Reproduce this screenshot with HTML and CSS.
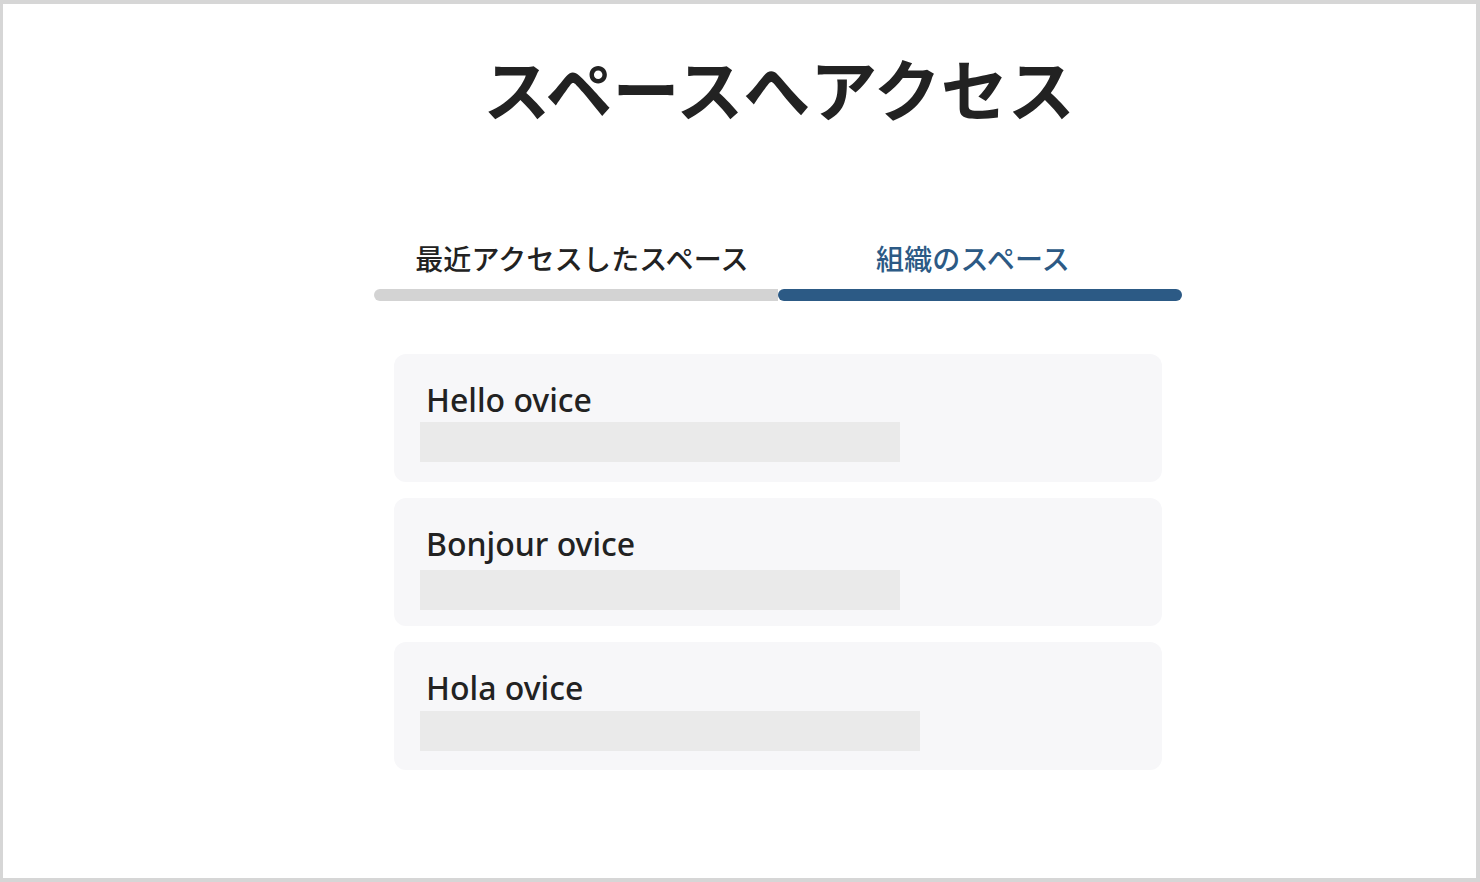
FILE: index.html
```html
<!DOCTYPE html>
<html lang="ja">
<head>
<meta charset="utf-8">
<title>スペースへアクセス</title>
<link rel="stylesheet" href="styles.css">
</head>
<body>
<div class="frame">
  <main class="column">
    <h1 class="title">スペースへアクセス</h1>
    <nav class="tabs">
      <div class="tab tab-first">
        <span class="tab-label">最近アクセスしたスペース</span>
        <span class="tab-bar"></span>
      </div>
      <div class="tab tab-active">
        <span class="tab-label">組織のスペース</span>
        <span class="tab-bar"></span>
      </div>
    </nav>
    <ul class="spaces">
      <li class="space">
        <div class="space-name">Hello ovice</div>
        <div class="skeleton"></div>
      </li>
      <li class="space">
        <div class="space-name">Bonjour ovice</div>
        <div class="skeleton skeleton-b"></div>
      </li>
      <li class="space">
        <div class="space-name">Hola ovice</div>
        <div class="skeleton skeleton-c"></div>
      </li>
    </ul>
  </main>
</div>
</body>
</html>
```

FILE: styles.css
```css
* { box-sizing: border-box; }
html, body { margin: 0; padding: 0; background: #fff; }
body {
  font-family: "Noto Sans", "Noto Sans CJK JP", sans-serif;
  color: #222;
}
.frame {
  width: 1480px;
  height: 882px;
  border: 4px solid #d6d6d6;
  border-left-width: 3px;
  padding-top: 42px;
}
.column {
  width: 808px;
  margin-left: 371px;
  display: flex;
  flex-direction: column;
}
.title {
  margin: 0;
  font-size: 67px;
  line-height: 88px;
  font-weight: 700;
  text-align: center;
  color: #222;
  padding-left: 2px;
}
.tabs {
  margin-top: 105px;
  display: flex;
}
.tab {
  flex: 1;
  display: flex;
  flex-direction: column;
  align-items: center;
}
.tab-label {
  font-size: 28px;
  line-height: 40px;
  font-weight: 500;
  color: #222;
  letter-spacing: 0.2px;
}
.tab-first .tab-label { margin-left: 12px; }
.tab-active .tab-label { margin-right: 14px; color: #2c5a85; }
.tab-bar {
  align-self: stretch;
  margin-top: 10px;
  height: 12px;
  background: #d3d3d3;
  border-radius: 6px 0 0 6px;
}
.tab-active .tab-bar {
  background: #2c5a85;
  border-radius: 6px;
}
.spaces {
  list-style: none;
  margin: 53px 0 0 20px;
  padding: 0;
  width: 768px;
  display: flex;
  flex-direction: column;
  gap: 16px;
}
.space {
  height: 128px;
  background: #f7f7f9;
  border-radius: 12px;
  padding: 24px 26px 0;
}
.space-name {
  font-size: 32px;
  line-height: 44px;
  font-weight: 500;
  padding-left: 6px;
  color: #222;
}
.skeleton {
  width: 480px;
  height: 40px;
  background: #eaeaea;
}
.skeleton-b { margin-top: 4px; }
.skeleton-c { margin-top: 1px; width: 500px; }
```
